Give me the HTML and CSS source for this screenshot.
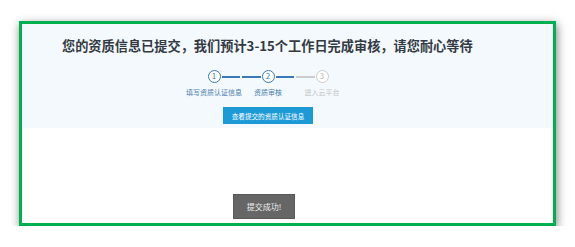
FILE: index.html
```html
<!DOCTYPE html>
<html lang="zh-CN">
<head>
    <meta charset="UTF-8">
    <meta name="viewport" content="width=device-width, initial-scale=1.0">
    <title>资质审核</title>
    <link rel="stylesheet" href="styles.css">
</head>
<body>
    <div class="frame">
        <div class="panel">
            <div class="content">
                <h1 class="title">您的资质信息已提交，我们预计3-15个工作日完成审核，请您耐心等待</h1>
                <div class="steps">
                    <div class="step done">
                        <div class="track">
                            <span class="line none"></span>
                            <span class="circle">1</span>
                            <span class="line"></span>
                        </div>
                        <span class="label">填写资质认证信息</span>
                    </div>
                    <div class="step done">
                        <div class="track">
                            <span class="line"></span>
                            <span class="circle">2</span>
                            <span class="line"></span>
                        </div>
                        <span class="label">资质审核</span>
                    </div>
                    <div class="step todo">
                        <div class="track">
                            <span class="line"></span>
                            <span class="circle">3</span>
                            <span class="line none"></span>
                        </div>
                        <span class="label">进入云平台</span>
                    </div>
                </div>
                <button class="view-btn">查看提交的资质认证信息</button>
            </div>
        </div>
        <div class="toast">提交成功!</div>
    </div>
</body>
</html>
```

FILE: styles.css
```css
* {
    margin: 0;
    padding: 0;
    box-sizing: border-box;
}
body {
    font-family: 'Noto Sans CJK SC', 'Noto Sans', sans-serif;
    background-color: #ffffff;
    color: #333;
}
.frame {
    position: relative;
    width: 537px;
    height: 205px;
    margin: 21px 0 0 19px;
    border: 3px solid #00b050;
    background-color: #ffffff;
    box-shadow: 1px 3px 9px rgba(0,0,0,0.5);
}
.panel {
    height: 104px;
    background-color: #f3f9fd;
}
.content {
    width: 412px;
    margin-left: 40px;
    padding-top: 12px;
    display: flex;
    flex-direction: column;
    align-items: center;
}
.title {
    align-self: flex-start;
    font-size: 13.2px;
    line-height: 20px;
    font-weight: 700;
    color: #333a44;
    white-space: nowrap;
}
.steps {
    display: flex;
    margin-top: 14px;
}
.step {
    width: 54px;
    display: flex;
    flex-direction: column;
    align-items: center;
}
.track {
    width: 100%;
    display: flex;
    align-items: center;
}
.line {
    flex: 1;
    height: 2px;
    margin: 0 1px;
    background-color: #3a78b8;
}
.line.none {
    background-color: transparent;
}
.circle {
    width: 13px;
    height: 13px;
    border: 1.5px solid #3a78b8;
    border-radius: 50%;
    background-color: #ffffff;
    color: #3a78b8;
    font-size: 8px;
    line-height: 10px;
    text-align: center;
}
.step.todo .circle {
    border-color: #cccccc;
    color: #bbbbbb;
}
.step.todo .line {
    background-color: #cccccc;
}
.step.todo .line.none {
    background-color: transparent;
}
.label {
    margin-top: 4px;
    font-size: 7px;
    line-height: 10px;
    color: #4a7db0;
    white-space: nowrap;
}
.step.todo .label {
    color: #c4c4c4;
}
.view-btn {
    margin-top: 10px;
    width: 90px;
    height: 17px;
    border: none;
    background-color: #1b9ad6;
    color: #ffffff;
    font-family: inherit;
    font-size: 6.6px;
}
.toast {
    position: absolute;
    left: 211px;
    top: 170px;
    width: 62px;
    height: 25px;
    background-color: #666666;
    border: 1px solid #5a5a5a;
    color: #eeeeee;
    font-size: 8px;
    line-height: 23px;
    text-align: center;
}
```
